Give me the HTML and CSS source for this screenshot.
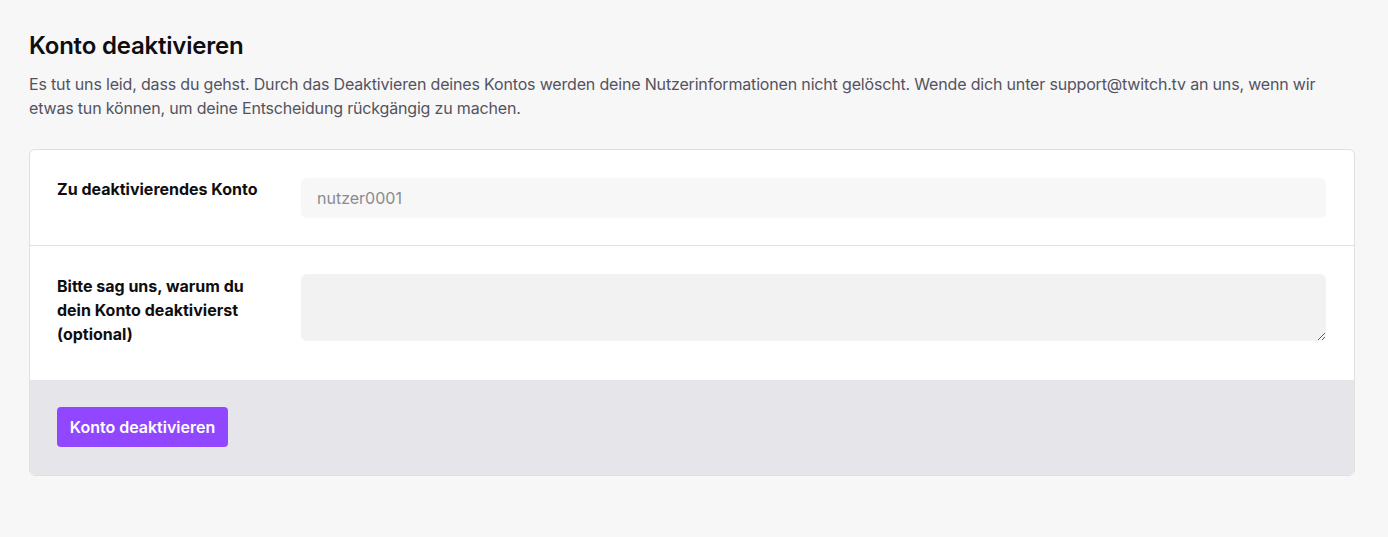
FILE: index.html
```html
<!DOCTYPE html>
<html>
<head>
  <title>Konto deaktivieren</title>
  <link rel="stylesheet" href="styles.css">
</head>
<body>
  <div class="page">
    <h1 class="page-title">Konto deaktivieren</h1>
    <p class="page-intro">Es tut uns leid, dass du gehst. Durch das Deaktivieren deines Kontos werden deine Nutzerinformationen nicht gelöscht. Wende dich unter support@twitch.tv an uns, wenn wir etwas tun können, um deine Entscheidung rückgängig zu machen.</p>

    <div class="card">
      <div class="form-row">
        <div class="form-label"><span>Zu deaktivierendes Konto</span></div>
        <div class="form-field">
          <input class="text-input" type="text" placeholder="nutzer0001" disabled>
        </div>
      </div>
      <div class="form-row form-row-tall">
        <div class="form-label"><span>Bitte sag uns, warum du dein Konto deaktivierst (optional)</span></div>
        <div class="form-field">
          <textarea class="text-area"></textarea>
        </div>
      </div>
      <div class="card-footer">
        <button class="primary-button">Konto deaktivieren</button>
      </div>
    </div>
  </div>
</body>
</html>
```

FILE: styles.css
```css
body {
  margin: 0;
  background: #f7f7f8;
  color: #0e0e10;
  font-family: Inter, "Noto Sans", sans-serif;
}
.page {
  padding: 30px 33px 0 29px;
}

.page-title {
  margin: 0;
  font-size: 24px;
  line-height: 32px;
  font-weight: 600;
  letter-spacing: -0.2px;
}
.page-intro {
  margin: 10px 0 29px;
  font-size: 16px;
  line-height: 24px;
  color: #53535f;
  letter-spacing: -0.17px;
  max-width: 1300px;
}

.card {
  background: #fff;
  border: 1px solid #e0e0e3;
  border-radius: 6px;
  overflow: hidden;
}
.form-row {
  display: flex;
  padding: 28px 28px 27px 27px;
  border-bottom: 1px solid #e0e0e3;
}
.form-row-tall {
  padding-bottom: 34px;
  border-bottom: none;
}
.form-label {
  width: 244px;
  flex-shrink: 0;
  font-size: 16px;
  line-height: 24px;
  font-weight: 700;
  padding-right: 30px;
  box-sizing: border-box;
}
.form-row:first-child .form-label {
  margin-top: -1px;
}
.form-field {
  flex-grow: 1;
}
.text-input,
.text-area {
  display: block;
  width: 100%;
  box-sizing: border-box;
  border: none;
  border-radius: 6px;
  font-family: inherit;
  font-size: 16px;
  padding: 0 16px;
  outline: none;
}
.text-input {
  height: 40px;
  background: #f7f7f8;
  color: #8a8a90;
}
.text-input::placeholder {
  color: #8a8a90;
}
.text-area {
  height: 67px;
  background: #f2f2f2;
  padding-top: 8px;
  resize: vertical;
}

.card-footer {
  background: #e6e6ea;
  padding: 27px 28px 28px 27px;
}
.primary-button {
  display: block;
  height: 40px;
  width: 171px;
  border: none;
  border-radius: 4px;
  background: #9147ff;
  color: #fff;
  font-family: inherit;
  font-size: 16px;
  font-weight: 600;
  cursor: pointer;
}
```
